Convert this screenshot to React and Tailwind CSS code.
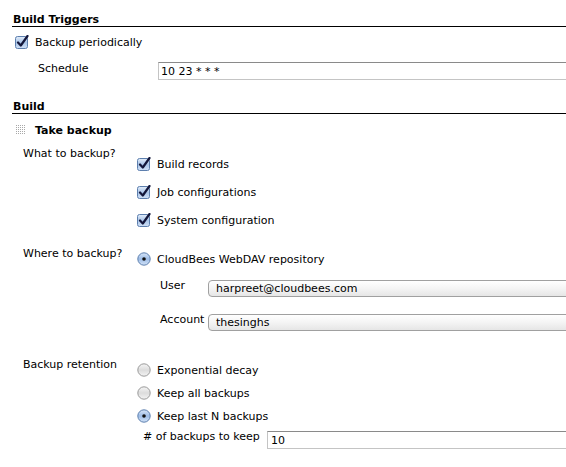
import React from 'react';

const font = { fontFamily: '"DejaVu Sans", Verdana, sans-serif' };

const CheckBox = () => (
    <svg width="14" height="14" viewBox="0 0 14 14" className="shrink-0">
        <defs>
            <linearGradient id="cbg" x1="0" y1="0" x2="0" y2="1">
                <stop offset="0" stopColor="#e4eefa" />
                <stop offset="0.5" stopColor="#a9c4e8" />
                <stop offset="1" stopColor="#cfe0f6" />
            </linearGradient>
        </defs>
        <rect x="0.5" y="1.5" width="12" height="12" rx="2" fill="url(#cbg)" stroke="#5d7fae" />
        <path d="M3 7.5 L5.8 10.5 L12.5 1" fill="none" stroke="#13163a" strokeWidth="2.2" strokeLinecap="round" strokeLinejoin="round" />
    </svg>
);

const Radio = ({ on }) => (
    <svg width="14" height="14" viewBox="0 0 14 14" className="shrink-0">
        <defs>
            <linearGradient id="rbon" x1="0" y1="0" x2="0" y2="1">
                <stop offset="0" stopColor="#d8e6f8" />
                <stop offset="0.5" stopColor="#9dbce6" />
                <stop offset="1" stopColor="#d4e4f8" />
            </linearGradient>
            <linearGradient id="rboff" x1="0" y1="0" x2="0" y2="1">
                <stop offset="0" stopColor="#f6f6f6" />
                <stop offset="0.5" stopColor="#dcdcdc" />
                <stop offset="1" stopColor="#f4f4f4" />
            </linearGradient>
        </defs>
        <circle cx="7" cy="7" r="6.2" fill={on ? 'url(#rbon)' : 'url(#rboff)'} stroke={on ? '#5d7fae' : '#9a9a9a'} />
        {on && <circle cx="7" cy="7" r="1.8" fill="#111" />}
    </svg>
);

const Grip = () => (
    <svg width="12" height="11" viewBox="0 0 12 11" className="shrink-0">
        {[0, 1, 2, 3, 4].map((r) =>
            [0, 1, 2, 3, 4].map((c) => (
                <rect key={r + '-' + c} x={c * 2 + 1} y={r * 2} width="1" height="1" fill="#a8a8a8" />
            ))
        )}
    </svg>
);

const Option = ({ children, radio, on }) => (
    <div className="flex items-center h-[18px] gap-[6px]">
        {radio ? <Radio on={on} /> : <CheckBox />}
        <span className="leading-[13px]">{children}</span>
    </div>
);

const Header = ({ children, className }) => (
    <div className={'font-bold leading-[13px] pl-[1px] border-b border-black ' + className}>{children}</div>
);

const SelectBox = ({ value }) => (
    <div className="flex-1 -mr-[4px] mt-[1px] h-[17px] rounded-[4px] border border-[#a0a0a0] bg-gradient-to-b from-white via-[#f4f4f4] to-[#e6e6e6] pl-[7px] leading-[16px]">
        {value}
    </div>
);

export default function App() {
    return (
        <div style={font} className="w-[566px] h-[467px] overflow-hidden bg-white text-black text-[11px] pl-[12px]">
            <Header className="mt-[13px]">Build Triggers</Header>
            <div className="mt-[6px] pl-[3px]">
                <Option>Backup periodically</Option>
            </div>
            <div className="flex items-start mt-[11px]">
                <div className="w-[146px] pl-[26px] leading-[13px]">Schedule</div>
                <div className="flex-1 -mr-[4px] h-[18px] border border-[#c4c4c4] border-t-[#8a8a8a] pl-[2px] leading-[17px]">10 23 * * *</div>
            </div>

            <Header className="mt-[20px]">Build</Header>
            <div className="flex items-center gap-[8px] h-[14px] mt-[9px] pl-[3px]">
                <Grip />
                <span className="font-bold leading-[13px]">Take backup</span>
            </div>

            <div className="pl-[11px]">
                <div className="flex items-start mt-[10px]">
                    <div className="w-[114px] leading-[13px]">What to backup?</div>
                    <div className="flex flex-col gap-[10px] pt-[8px]">
                        <Option>Build records</Option>
                        <Option>Job configurations</Option>
                        <Option>System configuration</Option>
                    </div>
                </div>

                <div className="flex items-start mt-[18px]">
                    <div className="w-[114px] leading-[13px]">Where to backup?</div>
                    <div className="flex-1 pt-[3px]">
                        <Option radio on>CloudBees WebDAV repository</Option>
                        <div className="flex items-start mt-[11px] pl-[23px]">
                            <div className="w-[48px] leading-[13px]">User</div>
                            <SelectBox value="harpreet@cloudbees.com" />
                        </div>
                        <div className="flex items-start mt-[16px] pl-[23px]">
                            <div className="w-[48px] leading-[13px]">Account</div>
                            <SelectBox value="thesinghs" />
                        </div>
                    </div>
                </div>

                <div className="flex items-start mt-[27px]">
                    <div className="w-[114px] leading-[13px]">Backup retention</div>
                    <div className="flex-1 pt-[3px]">
                        <div className="flex flex-col gap-[5px]">
                            <Option radio>Exponential decay</Option>
                            <Option radio>Keep all backups</Option>
                            <Option radio on>Keep last N backups</Option>
                        </div>
                        <div className="flex items-start mt-[5px] pl-[6px]">
                            <div className="w-[124px] leading-[13px]">
                                # of backups to keep
                            </div>
                            <div className="flex-1 -mr-[4px] mt-[1px] h-[18px] border border-[#c4c4c4] border-t-[#8a8a8a] pl-[3px] leading-[17px]">10</div>
                        </div>
                    </div>
                </div>
            </div>
        </div>
    );
}
